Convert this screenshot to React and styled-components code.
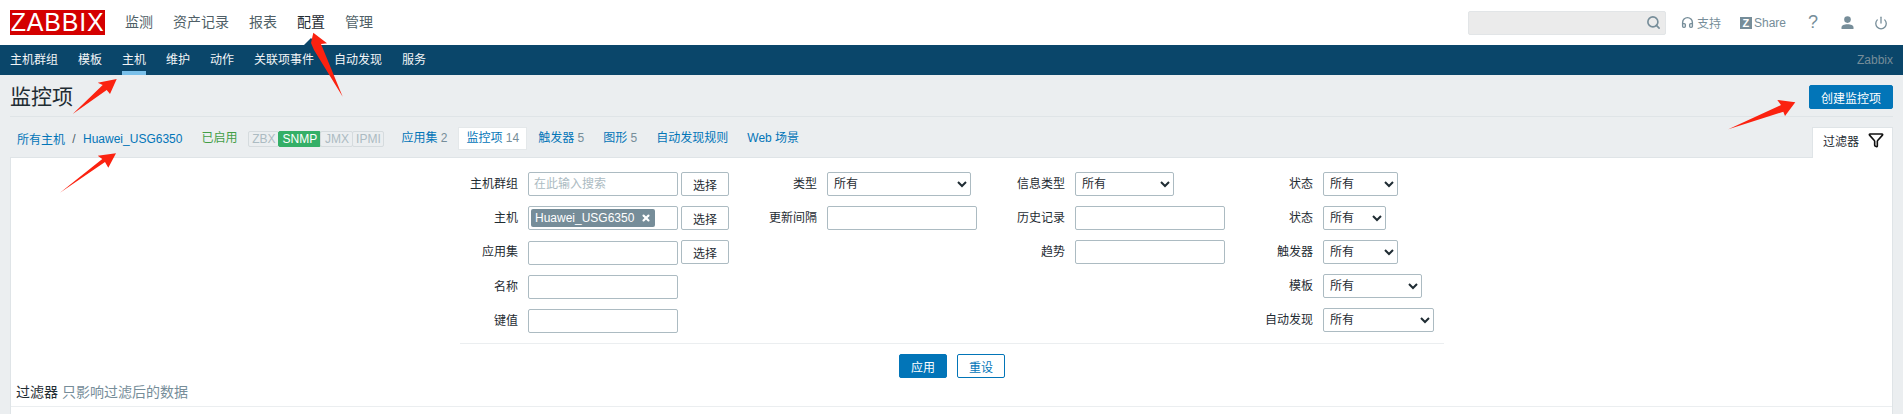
import React from 'react';
import styled, { createGlobalStyle } from 'styled-components';
import { Search, Headphones, Power, Filter, X } from 'lucide-react';

const GlobalStyle = createGlobalStyle`
    html, body {
        margin: 0;
        height: 100%;
        overflow: hidden;
        background-color: #ebeef0;
    }
    body, input, select, button {
        font-family: "Liberation Sans", "Noto Sans CJK SC", sans-serif;
        font-size: 12px;
        color: #1f2c33;
    }
`;

const Page = styled.div`
    position: relative;
    height: 414px;
    overflow: hidden;
`;

const TopBar = styled.header`
    display: flex;
    align-items: center;
    height: 45px;
    padding: 0 5px 0 10px;
    box-sizing: border-box;
    background-color: #fff;
`;

const Logo = styled.div`
    width: 95px;
    height: 25px;
    margin-right: 20px;
    background-color: #d40000;
    color: #fff;
    font-size: 25px;
    line-height: 25px;
    letter-spacing: 0.8px;
    text-align: center;
`;

const TopMenu = styled.nav`
    display: flex;
    gap: 20px;
    margin-bottom: 2px;
`;

const TopItem = styled.a`
    position: relative;
    font-size: 14px;
    line-height: 20px;
    color: ${(p) => (p.$active ? '#1f2c33' : '#4f5f67')};

    ${(p) => p.$active && `
        &::after {
            content: '';
            position: absolute;
            left: 6px;
            bottom: -14px;
            border-left: 8px solid transparent;
            border-right: 8px solid transparent;
            border-bottom: 8px solid #0a466a;
        }
    `}
`;

const TopTools = styled.div`
    display: flex;
    align-items: center;
    margin-left: auto;
    color: #768d99;
`;

const SearchBox = styled.div`
    display: flex;
    align-items: center;
    justify-content: flex-end;
    width: 198px;
    height: 24px;
    margin-right: 15px;
    padding-right: 4px;
    box-sizing: border-box;
    background-color: #ebebeb;
    border: 1px solid #e2e5e7;
    border-radius: 2px;
    color: #768d99;
`;

const ToolLink = styled.a`
    display: flex;
    align-items: center;
    gap: ${(p) => p.$gap || 3}px;
    margin-right: ${(p) => p.$after || 0}px;
    color: #768d99;
    white-space: nowrap;
`;

const ZBadge = styled.span`
    width: 12px;
    height: 12px;
    background-color: #768d99;
    color: #fff;
    font-size: 11px;
    font-weight: bold;
    line-height: 12px;
    text-align: center;
`;

const IconSlot = styled.a`
    display: flex;
    align-items: center;
    justify-content: center;
    width: 34px;
    height: 24px;
    color: #768d99;
    font-size: 18px;
`;

const SubBar = styled.nav`
    display: flex;
    align-items: stretch;
    gap: 20px;
    height: 30px;
    padding: 0 10px;
    box-sizing: border-box;
    background-color: #0a466a;
`;

const SubItem = styled.a`
    display: flex;
    align-items: center;
    height: 30px;
    box-sizing: border-box;
    color: #f2f5f7;
    border-bottom: 4px solid ${(p) => (p.$active ? '#7ac0ea' : 'transparent')};
`;

const SubBrand = styled.span`
    margin-left: auto;
    align-self: center;
    color: #768d99;
`;

const Main = styled.main`
    padding: 0 10px;
`;

const TitleRow = styled.div`
    display: flex;
    align-items: center;
    justify-content: space-between;
    height: 42px;
    padding: 10px 0 7px;
    box-sizing: border-box;
    border-bottom: 1px solid #dfe4e7;
`;

const Title = styled.h1`
    margin: 0;
    font-size: 21px;
    font-weight: normal;
    line-height: 24px;
`;

const CreateButton = styled.button`
    width: 84px;
    height: 24px;
    padding: 0;
    border: 1px solid #0275b8;
    border-radius: 2px;
    background-color: #0275b8;
    color: #fff;
`;

const TabRow = styled.div`
    display: flex;
    align-items: flex-start;
    height: 40px;
    padding: 11px 0 0 7px;
    box-sizing: border-box;
`;

const Crumbs = styled.div`
    display: flex;
    align-items: center;
    height: 21px;
`;

const Crumb = styled.a`
    color: #0275b8;
`;

const CrumbSep = styled.span`
    width: 18px;
    text-align: center;
    color: #4f5f67;
`;

const StatusText = styled.span`
    margin: 0 12px 0 19px;
    line-height: 21px;
    color: #429e47;
`;

const Availability = styled.div`
    display: flex;
    height: 16px;
    margin-top: 3px;
    margin-right: 10px;
`;

const Protocol = styled.span`
    width: ${(p) => p.$w}px;
    box-sizing: border-box;
    line-height: 14px;
    text-align: center;
    border: 1px solid ${(p) => (p.$on ? '#34af67' : '#d5dbde')};
    margin-left: -1px;
    background-color: ${(p) => (p.$on ? '#34af67' : '#ebeef0')};
    color: ${(p) => (p.$on ? '#fff' : '#acbbc2')};
    border-radius: 2px;
`;

const Tabs = styled.div`
    display: flex;
    gap: 5px;
`;

const Tab = styled.a`
    height: 21px;
    padding: 0 7px;
    box-sizing: border-box;
    line-height: 21px;
    color: #0275b8;
    white-space: nowrap;
    ${(p) => p.$active && `
        background-color: #fff;
        box-shadow: 0 0 0 1px #e4e8ea;
    `}
`;

const Count = styled.span`
    color: #768d99;
`;

const FilterTab = styled.div`
    position: relative;
    z-index: 1;
    display: flex;
    align-items: flex-start;
    gap: 9px;
    width: 81px;
    height: 31px;
    margin-left: auto;
    margin-top: -1px;
    padding: 4px 0 0 10px;
    box-sizing: border-box;
    background-color: #fff;
    border: 1px solid #dfe4e7;
    border-bottom: none;
`;

const Panel = styled.section`
    min-height: 260px;
    background-color: #fff;
    border: 1px solid #dfe4e7;
    padding-top: 14px;
    box-sizing: border-box;
`;

const FilterForm = styled.form`
    display: grid;
    grid-template-columns: 300px 240px 240px 204px;
    width: 984px;
    margin-left: 449px;
    padding-bottom: 10px;
    border-bottom: 1px solid #ebeef0;
`;

const Column = styled.div`
    display: flex;
    flex-direction: column;
    gap: 10px;
`;

const Row = styled.div`
    display: grid;
    grid-template-columns: ${(p) => p.$label}px auto;
    justify-content: start;
    column-gap: 10px;
    height: ${(p) => (p.$tall ? 25 : 24)}px;
`;

const Label = styled.label`
    line-height: 24px;
    text-align: right;
    white-space: nowrap;
    color: #1f2c33;
`;

const Controls = styled.div`
    display: flex;
    gap: 3px;
`;

const TextInput = styled.input`
    width: 150px;
    height: 24px;
    margin-top: ${(p) => p.$drop || 0}px;
    padding: 0 5px;
    box-sizing: border-box;
    background-color: #fff;
    border: 1px solid #acbbc2;
    border-radius: 2px;
    outline: none;

    &::placeholder {
        color: #acbbc2;
    }
`;

const Multi = styled.div`
    display: flex;
    align-items: flex-start;
    width: 150px;
    height: 24px;
    padding: 2px 0 0 2px;
    box-sizing: border-box;
    border: 1px solid #acbbc2;
    border-radius: 2px;
`;

const Chip = styled.span`
    display: flex;
    align-items: center;
    gap: 7px;
    width: 124px;
    height: 18px;
    padding: 0 0 0 4px;
    box-sizing: border-box;
    background-color: #768d99;
    border-radius: 2px;
    color: #fff;
`;

const PickButton = styled.button`
    width: 48px;
    height: 24px;
    padding: 0;
    background-color: #fff;
    border: 1px solid #acbbc2;
    border-radius: 2px;
`;

const Select = styled.select`
    width: ${(p) => p.$w}px;
    height: 24px;
    padding: 0 0 0 2px;
    box-sizing: border-box;
    background-color: #fff;
    border: 1px solid #acbbc2;
    border-radius: 2px;
`;

const Actions = styled.div`
    display: flex;
    justify-content: center;
    gap: 10px;
    width: 984px;
    margin: 10px 0 0 449px;
`;

const ActionButton = styled.button`
    width: 48px;
    height: 24px;
    padding: 0;
    border: 1px solid #0275b8;
    border-radius: 2px;
    background-color: ${(p) => (p.$primary ? '#0275b8' : '#fff')};
    color: ${(p) => (p.$primary ? '#fff' : '#0275b8')};
`;

const Note = styled.div`
    margin-top: 6px;
    padding: 0 0 6px 5px;
    font-size: 14px;
    line-height: 16px;
    border-bottom: 1px solid #ebeef0;
    color: #768d99;
`;

const NoteHead = styled.span`
    color: #1f2c33;
`;

const Arrows = styled.svg`
    position: absolute;
    top: 0;
    left: 0;
    pointer-events: none;
`;

const topMenu = ['监测', '资产记录', '报表', '配置', '管理'];
const subMenu = ['主机群组', '模板', '主机', '维护', '动作', '关联项事件', '自动发现', '服务'];

const protocols = [
    { name: 'ZBX', w: 31 },
    { name: 'SNMP', w: 43, on: true },
    { name: 'JMX', w: 33 },
    { name: 'IPMI', w: 32 },
];

const tabs = [
    { name: '应用集', count: 2 },
    { name: '监控项', count: 14, active: true },
    { name: '触发器', count: 5 },
    { name: '图形', count: 5 },
    { name: '自动发现规则' },
    { name: 'Web 场景' },
];

const arrowShapes = [
    '116.7,79 97.7,82.7 102.7,85 72.7,114 106.7,90 110,94',
    '313.3,32.7 327,43.3 321,44 342.7,96.7 314,50 311,43',
    '116,153.3 97.7,155.7 102.3,159 60,192.7 105,162 108.3,167.7',
    '1795.3,102.3 1777.3,100 1781,105 1728.3,129.3 1783.3,111.7 1785,116',
];

const Option = () => <option>所有</option>;

function UserIcon() {
    return (
        <svg width="13" height="13" viewBox="0 0 13 13" fill="currentColor">
            <circle cx="6.5" cy="3.6" r="3.3" />
            <path d="M0.5 13v-1.6c0-2 2.6-3.2 6-3.2s6 1.2 6 3.2V13z" />
        </svg>
    );
}

function App() {
    return (
        <Page>
            <GlobalStyle />
            <TopBar>
                <Logo>ZABBIX</Logo>
                <TopMenu>
                    {topMenu.map((item) => (
                        <TopItem key={item} $active={item === '配置'}>{item}</TopItem>
                    ))}
                </TopMenu>
                <TopTools>
                    <SearchBox>
                        <Search size={15} strokeWidth={2.6} />
                    </SearchBox>
                    <ToolLink $after={19}>
                        <Headphones size={13} strokeWidth={2.6} />
                        <span>支持</span>
                    </ToolLink>
                    <ToolLink $gap={2} $after={10}>
                        <ZBadge>Z</ZBadge>
                        <span>Share</span>
                    </ToolLink>
                    <IconSlot>?</IconSlot>
                    <IconSlot><UserIcon /></IconSlot>
                    <IconSlot><Power size={14} strokeWidth={2.2} /></IconSlot>
                </TopTools>
            </TopBar>
            <SubBar>
                {subMenu.map((item) => (
                    <SubItem key={item} $active={item === '主机'}>{item}</SubItem>
                ))}
                <SubBrand>Zabbix</SubBrand>
            </SubBar>
            <Main>
                <TitleRow>
                    <Title>监控项</Title>
                    <CreateButton>创建监控项</CreateButton>
                </TitleRow>
                <TabRow>
                    <Crumbs>
                        <Crumb>所有主机</Crumb>
                        <CrumbSep>/</CrumbSep>
                        <Crumb>Huawei_USG6350</Crumb>
                    </Crumbs>
                    <StatusText>已启用</StatusText>
                    <Availability>
                        {protocols.map((p) => (
                            <Protocol key={p.name} $w={p.w} $on={p.on}>{p.name}</Protocol>
                        ))}
                    </Availability>
                    <Tabs>
                        {tabs.map((t) => (
                            <Tab key={t.name} $active={t.active}>
                                {t.name}
                                {t.count !== undefined && <Count> {t.count}</Count>}
                            </Tab>
                        ))}
                    </Tabs>
                    <FilterTab>
                        <span>过滤器</span>
                        <Filter size={16} color="#111" strokeWidth={2.4} />
                    </FilterTab>
                </TabRow>
                <Panel>
                    <FilterForm>
                        <Column>
                            <Row $label={58}>
                                <Label>主机群组</Label>
                                <Controls>
                                    <TextInput placeholder="在此输入搜索" />
                                    <PickButton type="button">选择</PickButton>
                                </Controls>
                            </Row>
                            <Row $label={58}>
                                <Label>主机</Label>
                                <Controls>
                                    <Multi>
                                        <Chip>
                                            Huawei_USG6350
                                            <X size={10} strokeWidth={5} />
                                        </Chip>
                                    </Multi>
                                    <PickButton type="button">选择</PickButton>
                                </Controls>
                            </Row>
                            <Row $label={58} $tall>
                                <Label>应用集</Label>
                                <Controls>
                                    <TextInput $drop={1} />
                                    <PickButton type="button">选择</PickButton>
                                </Controls>
                            </Row>
                            <Row $label={58}>
                                <Label>名称</Label>
                                <TextInput />
                            </Row>
                            <Row $label={58}>
                                <Label>键值</Label>
                                <TextInput />
                            </Row>
                        </Column>
                        <Column>
                            <Row $label={57}>
                                <Label>类型</Label>
                                <Select $w={144}><Option /></Select>
                            </Row>
                            <Row $label={57}>
                                <Label>更新间隔</Label>
                                <TextInput />
                            </Row>
                        </Column>
                        <Column>
                            <Row $label={65}>
                                <Label>信息类型</Label>
                                <Select $w={99}><Option /></Select>
                            </Row>
                            <Row $label={65}>
                                <Label>历史记录</Label>
                                <TextInput />
                            </Row>
                            <Row $label={65}>
                                <Label>趋势</Label>
                                <TextInput />
                            </Row>
                        </Column>
                        <Column>
                            <Row $label={73}>
                                <Label>状态</Label>
                                <Select $w={75}><Option /></Select>
                            </Row>
                            <Row $label={73}>
                                <Label>状态</Label>
                                <Select $w={63}><Option /></Select>
                            </Row>
                            <Row $label={73}>
                                <Label>触发器</Label>
                                <Select $w={75}><Option /></Select>
                            </Row>
                            <Row $label={73}>
                                <Label>模板</Label>
                                <Select $w={99}><Option /></Select>
                            </Row>
                            <Row $label={73}>
                                <Label>自动发现</Label>
                                <Select $w={111}><Option /></Select>
                            </Row>
                        </Column>
                    </FilterForm>
                    <Actions>
                        <ActionButton $primary>应用</ActionButton>
                        <ActionButton>重设</ActionButton>
                    </Actions>
                    <Note>
                        <NoteHead>过滤器</NoteHead> 只影响过滤后的数据
                    </Note>
                </Panel>
            </Main>
            <Arrows width="1903" height="414" viewBox="0 0 1903 414">
                {arrowShapes.map((points) => (
                    <polygon key={points} points={points} fill="#fb2210" />
                ))}
            </Arrows>
        </Page>
    );
}

export default App;
